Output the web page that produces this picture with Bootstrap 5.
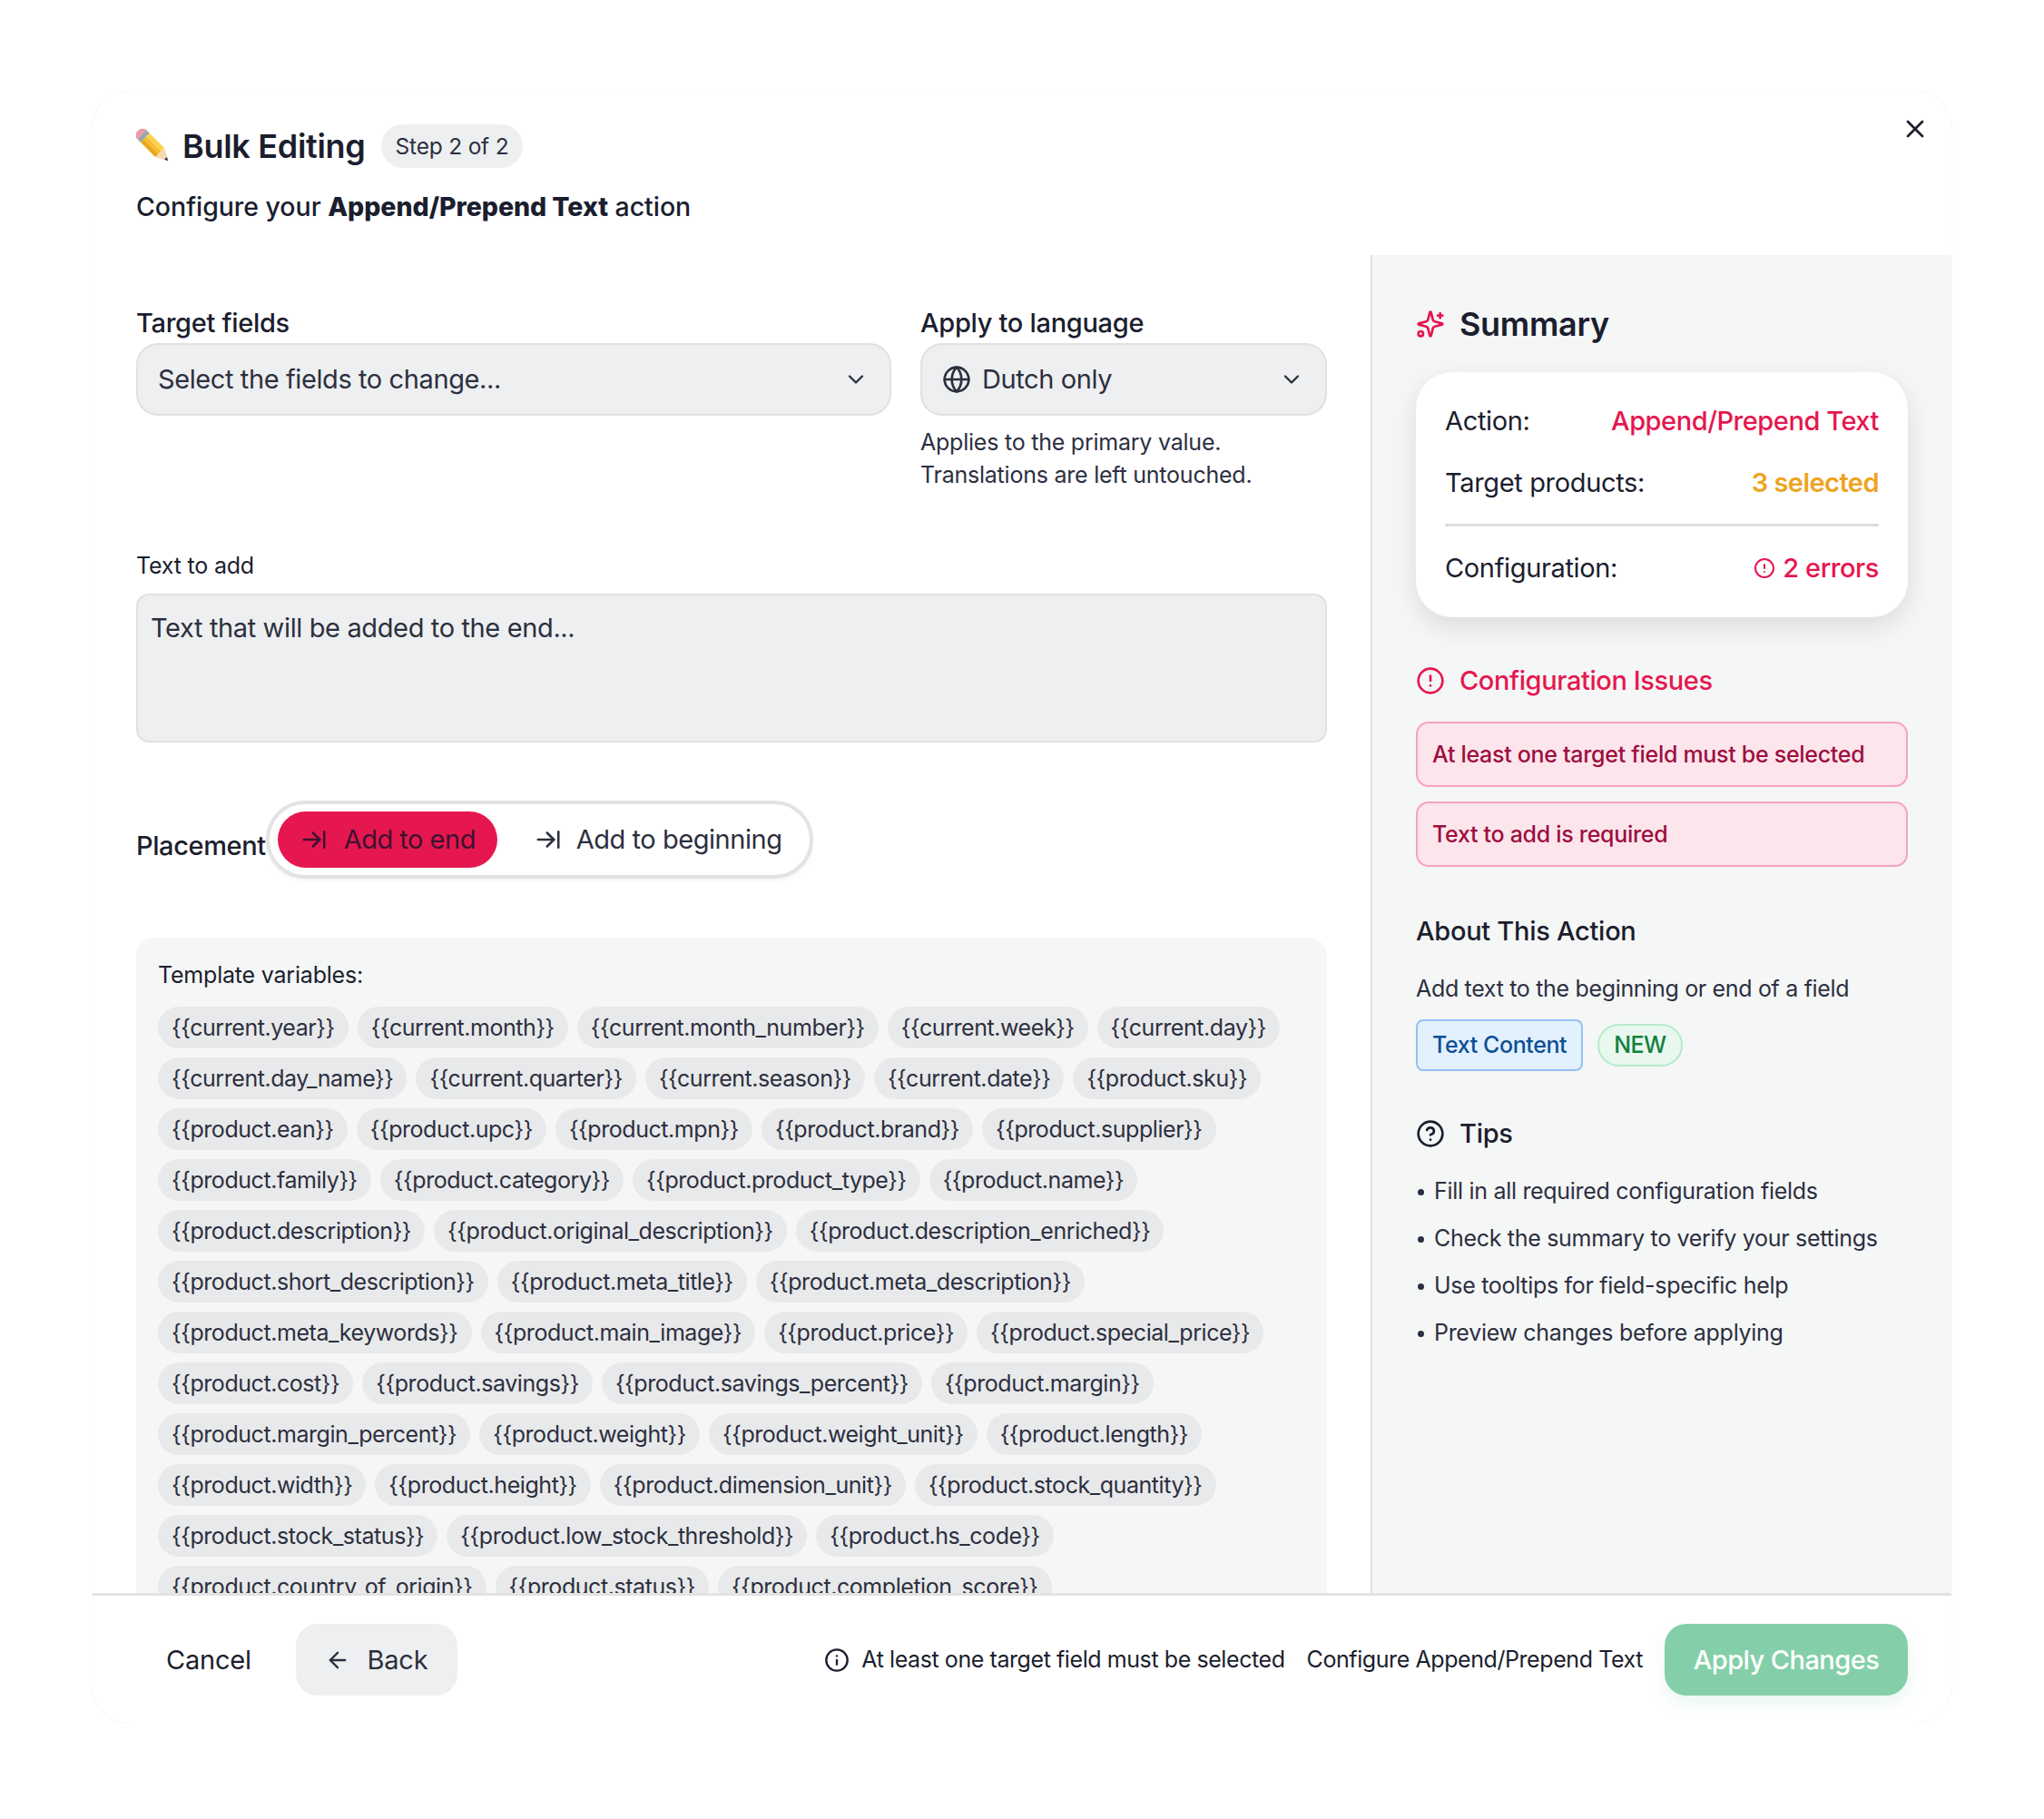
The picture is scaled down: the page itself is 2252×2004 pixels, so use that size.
<!DOCTYPE html>
<html lang="en">
<head>
  <meta charset="UTF-8" />
  <meta name="viewport" content="width=device-width, initial-scale=1.0"/>
  <link href="https://cdn.jsdelivr.net/npm/bootstrap@5.3.3/dist/css/bootstrap.min.css" rel="stylesheet">
  <title>Bulk Editing</title>
  <style>
    body { background: #fff; color: #1b1e2e; font-family: Inter, "Noto Sans", sans-serif; }
    svg.ico { fill: none; stroke: currentColor; stroke-width: 2; stroke-linecap: round; stroke-linejoin: round; flex: none; }

    .edit-modal { width: 2048px; height: 1798px; margin: 100px auto 0; display: flex; flex-direction: column; border-radius: 40px; box-shadow: 0 0 1px rgba(230, 23, 79, .18); overflow: hidden; }
    .edit-head { height: 181px; padding: 36px 48px 0; position: relative; flex: none; }
    .pencil-ico { margin-right: 13px; }
    .edit-title { font-size: 36px; line-height: 50px; font-weight: 600; margin: 0; letter-spacing: -.3px; }
    .step-pill { background: #eeeff0; border-radius: 24px; font-size: 24.5px; line-height: 48px; padding: 0 16px; color: #2c2f3f; margin-left: 17px; letter-spacing: -.2px; }
    .edit-sub { font-size: 28.5px; font-weight: 500; line-height: 40px; margin: 22px 0 0; letter-spacing: -.04px; }
    .edit-sub b { font-weight: 800; }
    .close-x { position: absolute; right: 24px; top: 26px; background: none; border: 0; padding: 0; color: #1b1e2e; line-height: 0; }

    .edit-body { flex: 1; display: flex; min-height: 0; }
    .edit-main { width: 1408px; flex: none; padding: 54px 48px 0; overflow: hidden; }
    .edit-side { flex: 1; background: #f5f6f6; border-left: 2px solid #dedfe0; padding: 51px 48px 0; }

    .top-fields { gap: 32px; }
    .fld-label { font-size: 29px; font-weight: 500; line-height: 42px; margin: 0 0 1px; letter-spacing: -.3px; }
    .pick-btn { height: 80px; width: 100%; background: #eeeff0; border: 2px solid #e0e1e2; border-radius: 24px; font-size: 29px; color: #2c2f3f; display: flex; align-items: center; justify-content: space-between; padding: 0 23px 0 22px; letter-spacing: -.4px; }
    .pick-btn:hover { background: #eeeff0; border-color: #e0e1e2; color: #2c2f3f; }
    .lang-val { gap: 12px; }
    .fld-help { font-size: 25px; line-height: 36px; margin: 11px 0 0; color: #2c2f3f; letter-spacing: -.23px; }
    .add-label { font-size: 25px; line-height: 36px; margin: 64px 0 13px; letter-spacing: -.2px; }
    .add-text { height: 164px; background: #eeeff0 !important; border: 2px solid #e0e1e2; border-radius: 14px; font-size: 29px; padding: 14px 14px; resize: none; box-shadow: none !important; letter-spacing: -.37px; }
    .add-text::placeholder { color: #2c2f3f; opacity: 1; }

    .place-row { margin: 64px 0 65px; }
    .place-label { font-size: 29px; font-weight: 500; line-height: 40px; margin-top: 13px; letter-spacing: -.4px; }
    .place-toggle { width: 603px; height: 86px; border: 4px solid #e2e3e3; border-radius: 43px; padding: 8px 6px 8px 9px; box-shadow: 0 2px 4px rgba(0, 0, 0, .05); }
    .place-opt { height: 62px; border-radius: 31px; border: 0; font-size: 29px; background: none; color: #2c2f3f; padding: 0 0 0 41px; display: flex; align-items: center; gap: 16px; letter-spacing: -.45px; white-space: nowrap; }
    .place-opt.on { background: #e6174f; color: #3d1230; width: 242px; padding: 0 0 0 25px; gap: 18px; letter-spacing: -.5px; }

    .tpl-box { background: #f5f6f6; border-radius: 20px; padding: 23px 24px 40px; }
    .tpl-title { font-size: 25px; line-height: 36px; margin: 0 0 17px; color: #1b1e2e; letter-spacing: -.2px; }
    .chip-wrap { gap: 10px 10px; }
    .tpl-chip { background: #e8e9ea; border-radius: 23px; font-size: 25px; line-height: 46px; padding: 0 15px; color: #2c2f3f; white-space: nowrap; letter-spacing: -.44px; }

    .side-title { font-size: 36px; line-height: 50px; font-weight: 600; margin: 0 0 28px; letter-spacing: -.3px; }
    .sum-box { height: 270px; background: #fff; border-radius: 40px; box-shadow: 0 10px 30px rgba(0, 0, 0, .11); padding: 31px 32px 0; font-size: 29px; letter-spacing: -.35px; }
    .sum-line { height: 68px; line-height: 46px; }
    .sum-rule { border-top: 3px solid #dcdddf; margin-top: 0; padding-top: 23px; height: auto; }
    .v-red { color: #e6174f; font-weight: 500; letter-spacing: -.45px; }
    .v-amber { color: #eea320; font-weight: 600; letter-spacing: -.55px; }
    .issue-title { font-size: 29px; line-height: 42px; font-weight: 500; color: #e6174f; margin: 49px 0 24px; letter-spacing: -.4px; }
    .issue-box { height: 72px; background: #fde5ec; border: 2px solid #f5a3bd; border-radius: 14px; color: #9c0f40; font-size: 25px; font-weight: 500; line-height: 68px; padding: 0 16px; margin-bottom: 16px; letter-spacing: -.3px; }
    .side-head { font-size: 29px; line-height: 42px; font-weight: 500; margin: 50px 0 0; letter-spacing: -.28px; }
    .side-text { font-size: 25px; line-height: 36px; margin: 24px 0 16px; color: #2c2f3f; letter-spacing: -.33px; }
    .tag-blue { height: 57px; background: #e3f0fd; border: 2px solid #93c2f3; border-radius: 8px; color: #0b4f94; font-size: 25px; font-weight: 500; line-height: 53px; padding: 0 16px; letter-spacing: -.4px; }
    .tag-new { height: 47px; background: #e8f8ef; border: 2px solid #b2ecca; border-radius: 24px; color: #14803f; font-size: 25px; font-weight: 500; line-height: 43px; padding: 0 16px; letter-spacing: -.6px; }
    .tips-head { font-size: 29px; line-height: 42px; font-weight: 500; margin: 48px 0 16px; letter-spacing: -.3px; }
    .tips-list { list-style: none; padding: 0; margin: 0; font-size: 25px; line-height: 52px; color: #2c2f3f; letter-spacing: -.3px; }
    .tips-list li::before { content: ""; display: inline-block; width: 7px; height: 7px; border-radius: 50%; background: #2c2f3f; margin: 0 11px 4px 2px; }

    .edit-foot { height: 143px; flex: none; border-top: 3px solid #e2e3e3; padding: 31px 48px 0; display: flex; align-items: flex-start; }
    .foot-cancel { height: 79px; font-size: 29px; border: 0; background: none; color: #1b1e2e; padding: 0 33px; letter-spacing: -.2px; }
    .foot-back { height: 79px; width: 178px; margin-left: 16px; font-size: 29px; border: 0; background: #eeeff0; color: #2c2f3f; border-radius: 24px; display: flex; align-items: center; justify-content: center; gap: 18px; letter-spacing: -.2px; }
    .foot-note { font-size: 25px; line-height: 79px; letter-spacing: -.42px; color: #1b1e2e; }
    .foot-gap { gap: 13px; }
    .foot-apply { height: 79px; width: 268px; font-size: 29px; font-weight: 500; border: 0; color: #fff; border-radius: 24px; background: #84cfa9; box-shadow: 0 8px 18px rgba(132, 207, 169, .18); letter-spacing: -.55px; }
  </style>
</head>
<body>
  <div class="edit-modal">

    <div class="edit-head">
      <div class="d-flex align-items-center">
        <svg class="pencil-ico" width="38" height="38" viewBox="-19 -19 38 38">
          <g transform="rotate(45)">
            <path d="M-21-7h3v14h-3a3 3 0 0 1-3-3v-8a3 3 0 0 1 3-3z" fill="#ef9aa8"/>
            <rect x="-18" y="-7" width="5" height="14" fill="#9aa3ad"/>
            <rect x="-13" y="-7" width="23" height="5" fill="#fbd24a"/>
            <rect x="-13" y="-2" width="23" height="4" fill="#f7bd2a"/>
            <rect x="-13" y="2" width="23" height="5" fill="#eda51c"/>
            <path d="M10-7 23 0 10 7z" fill="#f4dcae"/>
            <path d="M19-2 23 0 19 2z" fill="#33343a"/>
          </g>
        </svg>
        <h1 class="edit-title">Bulk Editing</h1>
        <span class="step-pill">Step 2 of 2</span>
      </div>
      <p class="edit-sub">Configure your <b>Append/Prepend Text</b> action</p>
      <button type="button" class="close-x" aria-label="Close">
        <svg class="ico" width="32" height="32" viewBox="0 0 24 24"><path d="M18 6 6 18"/><path d="m6 6 12 12"/></svg>
      </button>
    </div>

    <div class="edit-body">
      <div class="edit-main">
        <div class="d-flex top-fields">
          <div class="field-a">
            <p class="fld-label">Target fields</p>
            <button type="button" class="btn pick-btn" style="width:832px">
              <span>Select the fields to change...</span>
              <svg class="ico" width="28" height="28" viewBox="0 0 24 24"><path d="m6 9 6 6 6-6"/></svg>
            </button>
          </div>
          <div class="field-b">
            <p class="fld-label">Apply to language</p>
            <button type="button" class="btn pick-btn" style="width:448px">
              <span class="d-flex align-items-center lang-val">
                <svg class="ico" width="32" height="32" viewBox="0 0 24 24"><circle cx="12" cy="12" r="10"/><path d="M12 2a14.500 14.500 0 0 0 0 20 14.500 14.500 0 0 0 0-20"/><path d="M2 12h20"/></svg>
                Dutch only
              </span>
              <svg class="ico" width="28" height="28" viewBox="0 0 24 24"><path d="m6 9 6 6 6-6"/></svg>
            </button>
            <p class="fld-help">Applies to the primary value.<br>Translations are left untouched.</p>
          </div>
        </div>

        <p class="add-label">Text to add</p>
        <textarea class="form-control add-text" placeholder="Text that will be added to the end..."></textarea>

        <div class="d-flex align-items-center place-row">
          <span class="place-label">Placement</span>
          <div class="place-toggle d-flex">
            <button type="button" class="place-opt on">
              <svg class="ico" width="30" height="30" viewBox="0 0 24 24"><path d="M17 12H3"/><path d="m11 18 6-6-6-6"/><path d="M21 5v14"/></svg>
              Add to end
            </button>
            <button type="button" class="place-opt">
              <svg class="ico" width="30" height="30" viewBox="0 0 24 24"><path d="M17 12H3"/><path d="m11 18 6-6-6-6"/><path d="M21 5v14"/></svg>
              Add to beginning
            </button>
          </div>
        </div>

        <div class="tpl-box">
          <p class="tpl-title">Template variables:</p>
          <div class="d-flex flex-wrap chip-wrap">
            <span class="tpl-chip">{{current.year}}</span>
            <span class="tpl-chip">{{current.month}}</span>
            <span class="tpl-chip">{{current.month_number}}</span>
            <span class="tpl-chip">{{current.week}}</span>
            <span class="tpl-chip">{{current.day}}</span>
            <span class="tpl-chip">{{current.day_name}}</span>
            <span class="tpl-chip">{{current.quarter}}</span>
            <span class="tpl-chip">{{current.season}}</span>
            <span class="tpl-chip">{{current.date}}</span>
            <span class="tpl-chip">{{product.sku}}</span>
            <span class="tpl-chip">{{product.ean}}</span>
            <span class="tpl-chip">{{product.upc}}</span>
            <span class="tpl-chip">{{product.mpn}}</span>
            <span class="tpl-chip">{{product.brand}}</span>
            <span class="tpl-chip">{{product.supplier}}</span>
            <span class="tpl-chip">{{product.family}}</span>
            <span class="tpl-chip">{{product.category}}</span>
            <span class="tpl-chip">{{product.product_type}}</span>
            <span class="tpl-chip">{{product.name}}</span>
            <span class="tpl-chip">{{product.description}}</span>
            <span class="tpl-chip">{{product.original_description}}</span>
            <span class="tpl-chip">{{product.description_enriched}}</span>
            <span class="tpl-chip">{{product.short_description}}</span>
            <span class="tpl-chip">{{product.meta_title}}</span>
            <span class="tpl-chip">{{product.meta_description}}</span>
            <span class="tpl-chip">{{product.meta_keywords}}</span>
            <span class="tpl-chip">{{product.main_image}}</span>
            <span class="tpl-chip">{{product.price}}</span>
            <span class="tpl-chip">{{product.special_price}}</span>
            <span class="tpl-chip">{{product.cost}}</span>
            <span class="tpl-chip">{{product.savings}}</span>
            <span class="tpl-chip">{{product.savings_percent}}</span>
            <span class="tpl-chip">{{product.margin}}</span>
            <span class="tpl-chip">{{product.margin_percent}}</span>
            <span class="tpl-chip">{{product.weight}}</span>
            <span class="tpl-chip">{{product.weight_unit}}</span>
            <span class="tpl-chip">{{product.length}}</span>
            <span class="tpl-chip">{{product.width}}</span>
            <span class="tpl-chip">{{product.height}}</span>
            <span class="tpl-chip">{{product.dimension_unit}}</span>
            <span class="tpl-chip">{{product.stock_quantity}}</span>
            <span class="tpl-chip">{{product.stock_status}}</span>
            <span class="tpl-chip">{{product.low_stock_threshold}}</span>
            <span class="tpl-chip">{{product.hs_code}}</span>
            <span class="tpl-chip">{{product.country_of_origin}}</span>
            <span class="tpl-chip">{{product.status}}</span>
            <span class="tpl-chip">{{product.completion_score}}</span>
          </div>
        </div>
      </div>

      <div class="edit-side">
        <h2 class="side-title d-flex align-items-center gap-3">
          <svg class="ico" width="32" height="32" viewBox="0 0 24 24" style="color:#e6174f"><path d="M9.937 15.500A2 2 0 0 0 8.500 14.063l-6.135-1.582a.5.5 0 0 1 0-.962L8.500 9.936A2 2 0 0 0 9.937 8.500l1.582-6.135a.5.5 0 0 1 .963 0L14.063 8.500A2 2 0 0 0 15.500 9.937l6.135 1.581a.5.5 0 0 1 0 .964L15.500 14.063a2 2 0 0 0-1.437 1.437l-1.582 6.135a.5.5 0 0 1-.963 0z"/><path d="M20 3v4"/><path d="M22 5h-4"/><circle cx="4" cy="20" r="2"/></svg>
          Summary
        </h2>
        <div class="sum-box">
          <div class="sum-line d-flex justify-content-between"><span>Action:</span><span class="v-red">Append/Prepend Text</span></div>
          <div class="sum-line d-flex justify-content-between"><span>Target products:</span><span class="v-amber">3 selected</span></div>
          <div class="sum-line sum-rule d-flex justify-content-between">
            <span>Configuration:</span>
            <span class="v-red d-flex align-items-center gap-2">
              <svg class="ico" width="24" height="24" viewBox="0 0 24 24"><circle cx="12" cy="12" r="10"/><path d="M12 8v4"/><path d="M12 16h.01"/></svg>
              2 errors
            </span>
          </div>
        </div>

        <div class="issue-title d-flex align-items-center gap-3">
          <svg class="ico" width="32" height="32" viewBox="0 0 24 24"><circle cx="12" cy="12" r="10"/><path d="M12 8v4"/><path d="M12 16h.01"/></svg>
          Configuration Issues
        </div>
        <div class="issue-box">At least one target field must be selected</div>
        <div class="issue-box">Text to add is required</div>

        <div class="side-head">About This Action</div>
        <p class="side-text">Add text to the beginning or end of a field</p>
        <div class="d-flex align-items-center gap-3">
          <span class="tag-blue">Text Content</span>
          <span class="tag-new">NEW</span>
        </div>

        <div class="tips-head d-flex align-items-center gap-3">
          <svg class="ico" width="32" height="32" viewBox="0 0 24 24"><circle cx="12" cy="12" r="10"/><path d="M9.090 9a3 3 0 0 1 5.830 1c0 2-3 3-3 3"/><path d="M12 17h.01"/></svg>
          Tips
        </div>
        <ul class="tips-list">
          <li>Fill in all required configuration fields</li>
          <li>Check the summary to verify your settings</li>
          <li>Use tooltips for field-specific help</li>
          <li>Preview changes before applying</li>
        </ul>
      </div>
    </div>

    <div class="edit-foot">
      <button type="button" class="foot-cancel">Cancel</button>
      <button type="button" class="foot-back">
        <svg class="ico" width="28" height="28" viewBox="0 0 24 24"><path d="m12 19-7-7 7-7"/><path d="M19 12H5"/></svg>
        Back
      </button>
      <div class="ms-auto d-flex align-items-center foot-note foot-gap">
        <svg class="ico" width="28" height="28" viewBox="0 0 24 24"><circle cx="12" cy="12" r="10"/><path d="M12 16v-4"/><path d="M12 8h.01"/></svg>
        At least one target field must be selected
      </div>
      <div class="foot-note ms-4 me-4">Configure Append/Prepend Text</div>
      <button type="button" class="foot-apply">Apply Changes</button>
    </div>

  </div>
</body>
</html>
